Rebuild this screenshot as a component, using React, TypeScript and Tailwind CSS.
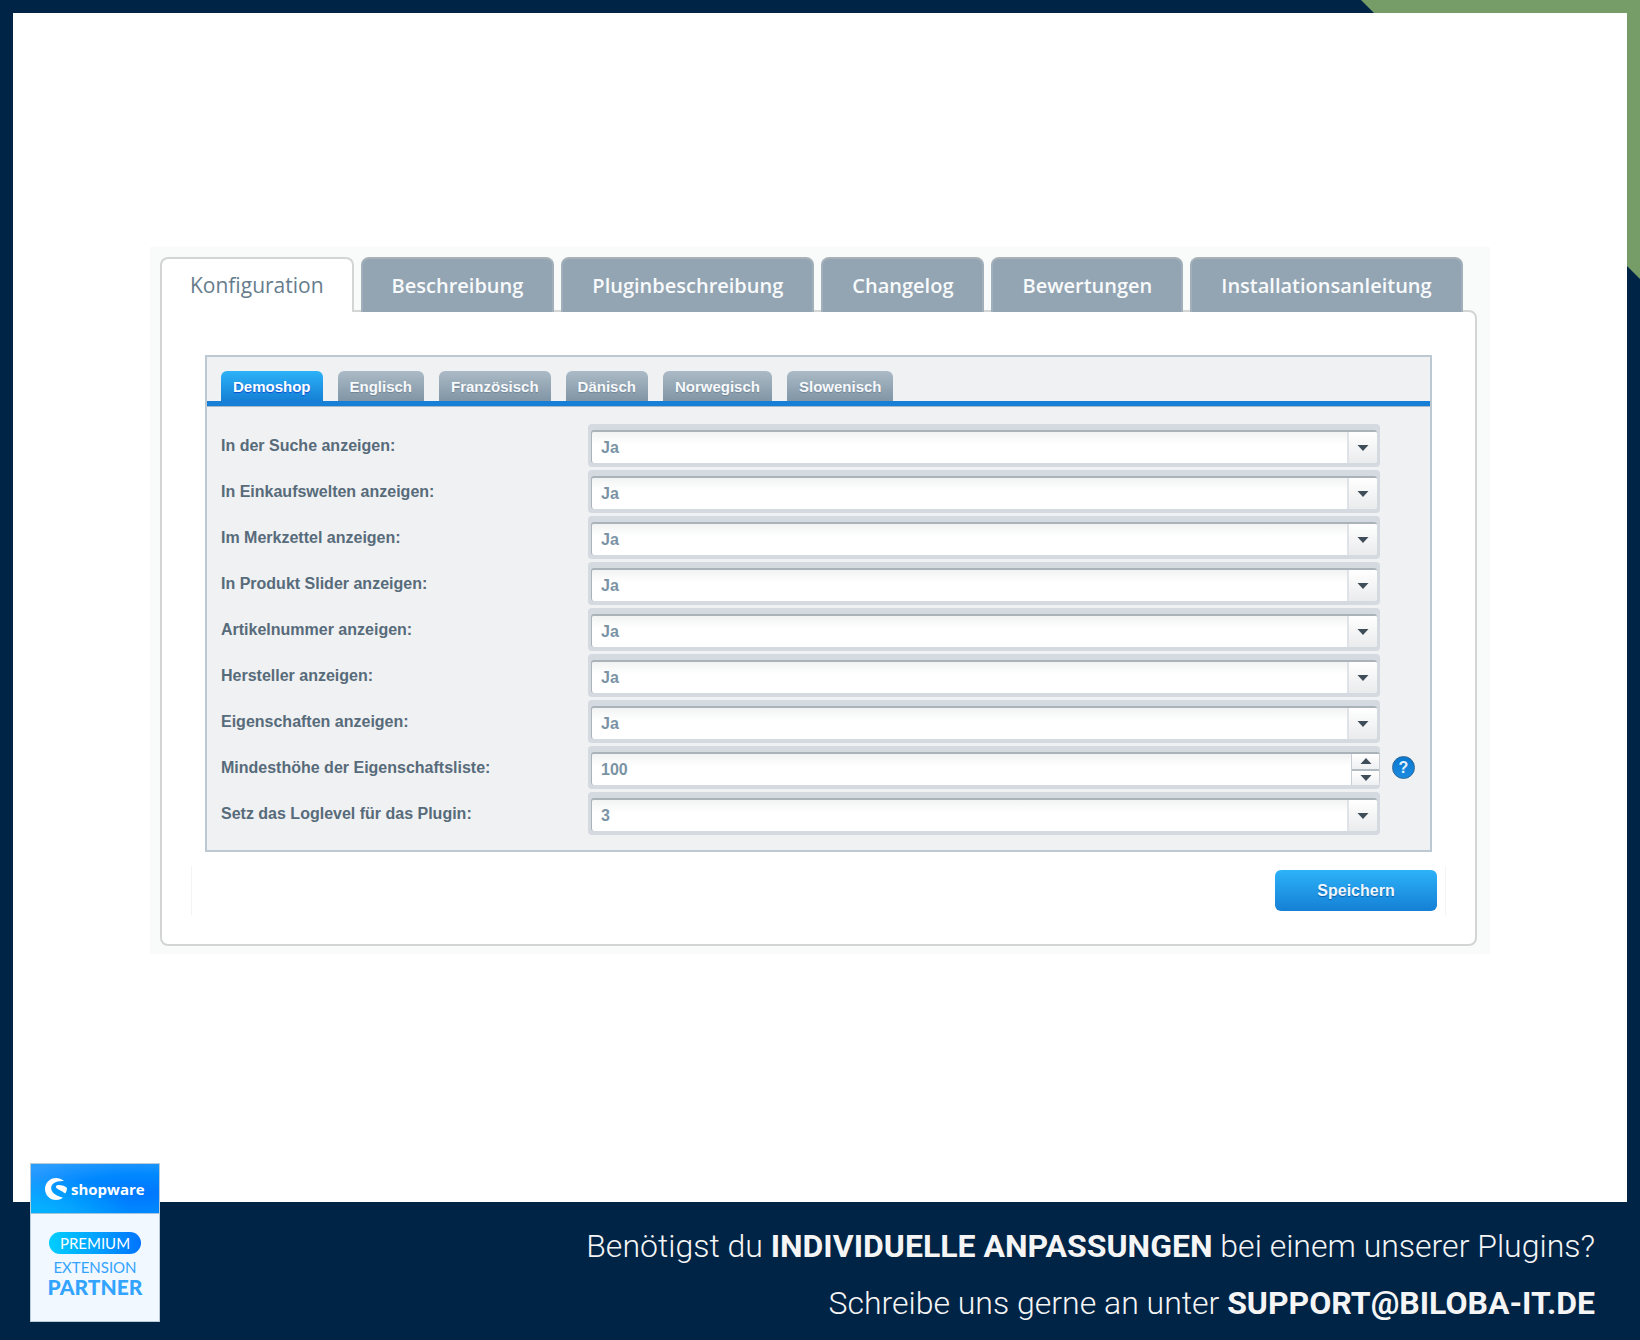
import { useState } from "react"

const mainTabs = [
  "Konfiguration",
  "Beschreibung",
  "Pluginbeschreibung",
  "Changelog",
  "Bewertungen",
  "Installationsanleitung",
]

const shopTabs = ["Demoshop", "Englisch", "Französisch", "Dänisch", "Norwegisch", "Slowenisch"]

const yesNo = ["Ja", "Nein"]
const logLevels = ["0", "1", "2", "3", "4"]

const fields = [
  { id: "search", label: "In der Suche anzeigen:", options: yesNo, value: "Ja" },
  { id: "emotion", label: "In Einkaufswelten anzeigen:", options: yesNo, value: "Ja" },
  { id: "note", label: "Im Merkzettel anzeigen:", options: yesNo, value: "Ja" },
  { id: "slider", label: "In Produkt Slider anzeigen:", options: yesNo, value: "Ja" },
  { id: "number", label: "Artikelnummer anzeigen:", options: yesNo, value: "Ja" },
  { id: "supplier", label: "Hersteller anzeigen:", options: yesNo, value: "Ja" },
  { id: "properties", label: "Eigenschaften anzeigen:", options: yesNo, value: "Ja" },
  { id: "minHeight", label: "Mindesthöhe der Eigenschaftsliste:", value: "100", help: true },
  { id: "logLevel", label: "Setz das Loglevel für das Plugin:", options: logLevels, value: "3" },
]

function Arrow({ up = false }: { up?: boolean }) {
  return (
    <svg width="12" height="6" viewBox="0 0 12 6" fill="#3f4d58" aria-hidden="true">
      <path d={up ? "M0.5 6 L6 0 L11.5 6 Z" : "M0.5 0 L6 6 L11.5 0 Z"} />
    </svg>
  )
}

function SelectField({ id, options, value }: { id: string; options: string[]; value: string }) {
  return (
    <div className="h-[43px] rounded bg-[#d5dae0] pt-[6px] pr-[3px] pb-1 pl-[3px]">
      <div className="relative h-full overflow-hidden rounded-[3px] border-t-2 border-l border-[#a9b3b9] bg-gradient-to-b from-[#f1f3f2] to-white to-40%">
        <select
          id={id}
          defaultValue={value}
          className="h-full w-full appearance-none pl-[9px] text-base font-bold text-[#7a93a5] outline-none"
        >
          {options.map((option) => (
            <option key={option}>{option}</option>
          ))}
        </select>
        <span className="pointer-events-none absolute inset-y-0 right-0 flex w-[30px] items-center justify-center border-l-2 border-[#dfe2e6] bg-gradient-to-b from-white to-[#eaebed]">
          <Arrow />
        </span>
      </div>
    </div>
  )
}

function NumberField({ id, value }: { id: string; value: string }) {
  const [current, setCurrent] = useState(Number(value))

  return (
    <div className="h-[43px] rounded bg-[#d5dae0] pt-[6px] pb-1 pl-[3px]">
      <div className="flex h-full overflow-hidden rounded-[3px] border-t-2 border-l border-[#a9b3b9] bg-gradient-to-b from-[#f1f3f2] to-white to-40%">
        <input
          id={id}
          type="number"
          value={current}
          onChange={(e) => setCurrent(Number(e.target.value))}
          className="min-w-0 flex-1 pl-[9px] text-base font-bold text-[#7a93a5] outline-none [appearance:textfield] [&::-webkit-inner-spin-button]:appearance-none"
        />
        <div className="flex w-[29px] flex-col border-x border-[#c9ced4]">
          <button
            type="button"
            aria-label="Erhöhen"
            onClick={() => setCurrent(current + 1)}
            className="flex flex-1 items-center justify-center border-b-2 border-[#b3bbc2] bg-gradient-to-b from-white to-[#eff0f2]"
          >
            <Arrow up />
          </button>
          <button
            type="button"
            aria-label="Verringern"
            onClick={() => setCurrent(current - 1)}
            className="flex flex-1 items-center justify-center bg-gradient-to-b from-white to-[#eff0f2]"
          >
            <Arrow />
          </button>
        </div>
      </div>
    </div>
  )
}

function PartnerBadge() {
  return (
    <div className="absolute bottom-[18px] left-[30px] w-[130px] border border-[#b9cbd6] bg-[#f2f8ff] font-['Lato',sans-serif]">
      <div className="flex h-[50px] items-center gap-1 border-b border-[#a3c4df] bg-[radial-gradient(ellipse_at_0%_100%,#00b4ff_0%,transparent_55%),radial-gradient(ellipse_at_85%_60%,#0076ff_0%,#0088ff_45%,#2b9dff_90%)] pl-[14px]">
        <svg width="22" height="22" viewBox="0 0 22 22" fill="white" aria-hidden="true">
          <path d="M18.5 2.6 C16.4 .9 13.900 0 11.200 0 C5 0 0 4.900 0 11 C0 17.100 5 22 11.200 22 C13.600 22 15.900 21.300 17.700 20 C17.900 19.800 17.800 19.600 17.500 19.500 C12.500 18.300 7.200 15.800 6.300 11.300 C5.300 6.200 10.500 2.900 18.300 3.100 C18.700 3.100 18.800 2.800 18.500 2.600 Z" />
          <path d="M21.900 9.700 C20.400 8 16.500 6.800 13.500 6.900 C11.500 7 10.400 8 11.100 9.400 C12.200 11.400 16.500 12.200 19.500 15 C19.900 15.400 20.300 15.400 20.600 14.900 C21.600 13.400 22 11.600 21.900 9.700 Z" />
        </svg>
        <span className="font-['Open_Sans',sans-serif] text-[15px] leading-5 font-bold text-white">shopware</span>
      </div>
      <div className="flex h-[107px] flex-col items-center pt-[18px] text-[#32a4ff]">
        <span className="h-[22px] w-[92px] rounded-full bg-gradient-to-r from-[#00ceff] to-[#0073ff] text-center text-[15px] leading-[22px] text-white">
          PREMIUM
        </span>
        <span className="mt-[3px] text-[15px] leading-5">EXTENSION</span>
        <span className="text-[21px] leading-5 font-black">PARTNER</span>
      </div>
    </div>
  )
}

export default function App() {
  const [mainTab, setMainTab] = useState("Konfiguration")
  const [shopTab, setShopTab] = useState("Demoshop")

  return (
    <div className="relative flex min-h-screen flex-col bg-[#002445] px-[13px] pt-[13px]">
      {/* Green corner behind the white page */}
      <div className="absolute top-0 right-0 size-[279px] bg-[#769d67] [clip-path:polygon(0_0,100%_0,100%_100%)]" />

      <main className="relative flex-1 bg-white px-[137px] pt-[234px]">
        <div className="bg-[#f9fbfa] px-[10px] pt-[10px] pr-[13px] pb-2">
          <div role="tablist" className="relative z-10 flex gap-[7px] font-['Open_Sans',sans-serif]">
            {mainTabs.map((tab) => (
              <button
                key={tab}
                role="tab"
                aria-selected={tab === mainTab}
                onClick={() => setMainTab(tab)}
                className={
                  tab === mainTab
                    ? "h-[55px] rounded-t-lg border-2 border-b-0 border-[#d3d4d4] bg-white px-7 text-[21px] font-medium text-[#667d8c]"
                    : "h-[55px] rounded-t-lg border-2 border-b-0 border-t-[#a9b1b6] border-x-[#a0afba] bg-[#93a5b3] px-[29px] text-xl font-semibold text-[#f8fafb]"
                }
              >
                {tab}
              </button>
            ))}
          </div>

          <section className="-mt-[2px] rounded-lg rounded-tl-none border-2 border-[#d3d4d4] bg-white px-[29px] pt-[43px] pb-[29px] font-['Liberation_Sans',Arial,sans-serif]">
            <form className="mx-[14px] border-2 border-[#bcc8d2] bg-[#f0f1f3] pt-[14px] pb-[15px]">
              <div role="tablist" className="flex gap-[15px] border-b-[5px] border-[#1780d6] pl-[14px]">
                {shopTabs.map((tab) => (
                  <button
                    key={tab}
                    type="button"
                    role="tab"
                    aria-selected={tab === shopTab}
                    onClick={() => setShopTab(tab)}
                    className={
                      tab === shopTab
                        ? "h-[30px] rounded-t-md bg-gradient-to-b from-[#2db2f8] to-[#1580d5] px-3 pt-0.5 text-[15px] font-bold text-white [text-shadow:0_1px_1px_#0b48d0]"
                        : "h-[30px] rounded-t-md bg-gradient-to-b from-[#abbac6] to-[#8195a5] px-3 pt-0.5 text-[15px] font-bold text-[#f7f9fb] [text-shadow:0_1px_1px_#6f8497]"
                    }
                  >
                    {tab}
                  </button>
                ))}
              </div>

              <div className="flex flex-col gap-[3px] border-t border-[#a5b9c9] pt-[17px] pl-[14px]">
                {fields.map((field) => (
                  <div key={field.id} className="flex items-center">
                    <label htmlFor={field.id} className="w-[367px] text-base font-bold text-[#576b7a]">
                      {field.label}
                    </label>
                    <div className="flex-1">
                      {field.options ? (
                        <SelectField id={field.id} options={field.options} value={field.value} />
                      ) : (
                        <NumberField id={field.id} value={field.value} />
                      )}
                    </div>
                    <div className="w-[50px] pl-3">
                      {field.help && (
                        <button
                          type="button"
                          aria-label="Hilfe"
                          className="flex size-[23px] items-center justify-center rounded-full border border-[#2a6596] bg-gradient-to-b from-[#0a78cf] to-[#1b8be0] text-base font-bold text-[#e3f1fb]"
                        >
                          ?
                        </button>
                      )}
                    </div>
                  </div>
                ))}
              </div>
            </form>

            <div className="mt-[14px] flex h-[49px] items-center justify-end border-x border-[#f3f4f5] pr-2">
              <button
                type="button"
                className="h-[41px] w-[162px] rounded-md bg-gradient-to-b from-[#2db2f8] to-[#1580d5] text-base font-bold text-[#eef7fd] [text-shadow:0_1px_1px_#0d5ca5]"
              >
                Speichern
              </button>
            </div>
          </section>
        </div>
      </main>

      <footer className="h-[138px] pt-4 pr-8 text-right font-['Roboto',sans-serif] text-[32px] leading-[57px] font-light text-[#f5f5f5]">
        <p>
          Benötigst du <strong className="font-bold">INDIVIDUELLE ANPASSUNGEN</strong> bei einem unserer Plugins?
        </p>
        <p>
          Schreibe uns gerne an unter{" "}
          <a href="mailto:support@biloba-it.de" className="font-bold">
            SUPPORT@BILOBA-IT.DE
          </a>
        </p>
      </footer>

      <PartnerBadge />
    </div>
  )
}
